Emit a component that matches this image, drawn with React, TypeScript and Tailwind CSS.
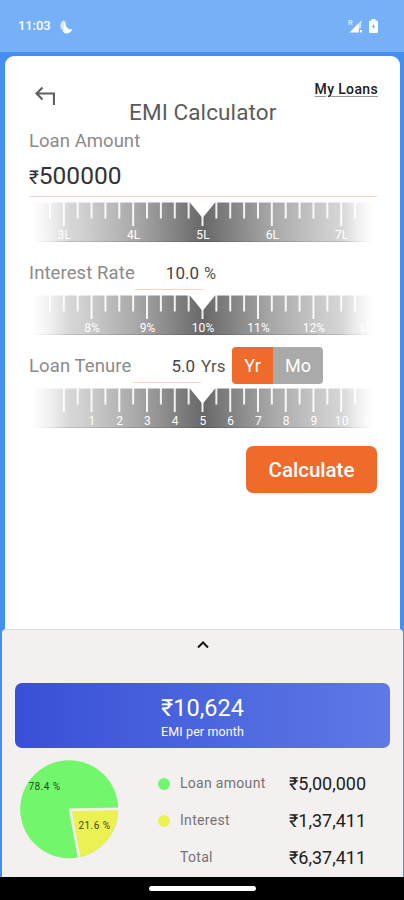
import React from 'react';

const CENTER = 173.5;
const STEP = 13.87;

type RulerProps = {
  id: string;
  every: number;
  first?: number;
  label: (n: number) => string;
};

// n counts the major divisions away from the selected value
const Ruler: React.FC<RulerProps> = ({ id, every, first = -11, label }) => {
  const ticks: number[] = [];
  for (let i = first; i <= 12; i++) ticks.push(i);

  return (
    <svg className="block h-10 w-[347px] overflow-visible" viewBox="0 0 347 40">
      <defs>
        <linearGradient id={`${id}-fill`} gradientUnits="userSpaceOnUse" x1="8" y1="26" x2="340" y2="14">
          <stop offset="0" stopColor="#e6e6e6" />
          <stop offset="0.14" stopColor="#d0d0d0" />
          <stop offset="0.3" stopColor="#a8a8a8" />
          <stop offset="0.5" stopColor="#686868" />
          <stop offset="0.7" stopColor="#a6a6a6" />
          <stop offset="0.86" stopColor="#cbcbcb" />
          <stop offset="1" stopColor="#e6e6e6" />
        </linearGradient>
        <linearGradient id={`${id}-fade`}>
          <stop offset="0.01" stopColor="#fff" stopOpacity="1" />
          <stop offset="0.12" stopColor="#fff" stopOpacity="0" />
          <stop offset="0.9" stopColor="#fff" stopOpacity="0" />
          <stop offset="0.99" stopColor="#fff" stopOpacity="1" />
        </linearGradient>
      </defs>
      <rect y="0.5" width="347" height="39.5" fill={`url(#${id}-fill)`} />
      <rect y="39" width="347" height="1" fill="#000" opacity="0.12" />
      <rect x="-1" width="349" height="41" fill={`url(#${id}-fade)`} />
      {ticks.map((i) => {
        const x = CENTER + i * STEP;
        const major = i % every === 0;
        return (
          <g key={i}>
            {i < 12 && (
              <line x1={x} x2={x} y1="0" y2={major ? 24 : 16.5} stroke="#fff" strokeOpacity="0.9" strokeWidth="2" />
            )}
            {major && (
              <text x={x + 0.5} y="37" textAnchor="middle" fontSize="12" fill="#fff" letterSpacing="0.1">
                {label(i / every)}
              </text>
            )}
          </g>
        );
      })}
      <path d={`M${CENTER - 13} 0H${CENTER + 13}L${CENTER} 16Z`} fill="#fff" />
    </svg>
  );
};

const legend = [
  { label: 'Loan amount', value: '₹5,00,000', dot: 'bg-[#72f76c]' },
  { label: 'Interest', value: '₹1,37,411', dot: 'bg-[#ecf152]' },
  { label: 'Total', value: '₹6,37,411', dot: 'bg-transparent' },
];

const StatusBar = () => (
  <div className="flex h-[52px] shrink-0 items-center bg-[#76b0f6] pl-[18px] pr-[26px] text-white">
    <span className="w-[32px] whitespace-nowrap text-[13px] font-medium tracking-[-0.1px]">11:03</span>
    <svg className="ml-[9px] mt-[1px] h-[16px] w-[15px]" viewBox="0 0 15 16">
      <path d="M5 1.200C2.800 2 1.300 4.200 1.300 6.800c0 2.600 1.600 4.600 3.700 5.400L8 11Z" fill="#fff" opacity="0.7" />
      <path d="M6.500 .8c-.6 4 .4 7.500 2.900 8.900 1.200.7 2.700.7 4.100.3-1.300 3.200-4 5-7 4.400L3.500 12.400l1.500-1C4.500 8.500 4.500 4 6.500 .8Z" fill="#fff" />
    </svg>
    <svg className="ml-auto h-[15px] w-[15px]" viewBox="0 0 15 15">
      <text x="0" y="6" fontSize="7.500" fontWeight="700" fill="#fff" opacity="0.7">R</text>
      <path d="M1.500 13.500 10.800 4V13.500Z" fill="#fff" />
      <path d="M11.300 3.500 14 1.500V3.200L12.800 4V9.500H11.300Z" fill="#fff" opacity="0.8" />
      <path d="M12 11h1.800v2.500H12Z" fill="#fff" />
    </svg>
    <svg className="ml-[6px] h-[14px] w-[9px]" viewBox="0 0 9 14">
      <path d="M2.500 0h4v1.500H7.500Q9 1.500 9 3v9.500q0 1.500-1.500 1.500h-6Q0 14 0 12.500V3q0-1.500 1.500-1.500h1Z" fill="#fff" />
      <path d="M5 4.500 2.800 8h1.400v2.600L6.300 7H5Z" fill="#76b0f6" />
    </svg>
  </div>
);

const PieChart = () => (
  <svg className="h-[100px] w-[100px] shrink-0" viewBox="0 0 100 100">
    <circle cx="49.200" cy="49.200" r="49" fill="#72f76c" />
    <path d="M49.200 49.200 98.200 48.400A49 49 0 0 1 59 97.200Z" fill="#ecf152" />
    <path d="M100 48.900 50.200 49.800 59.300 99" fill="none" stroke="#f3f0ef" strokeWidth="2.600" />
    <text x="8.500" y="30" fontSize="10" textLength="31.500" fill="#1f4a1d">78.4 %</text>
    <text x="58.500" y="68.500" fontSize="10" textLength="31.500" fill="#45471b">21.6 %</text>
  </svg>
);

const App: React.FC = () => {
  return (
    <div className="flex h-[900px] w-[404px] flex-col overflow-hidden bg-[#448ff0] font-[Roboto,'Liberation_Sans',sans-serif]">
      <StatusBar />

      <main className="ml-[5px] mr-[4px] mt-1 h-[573px] shrink-0 rounded-t-[9px] bg-white pl-6 pr-[23px]">
        <header className="flex h-[69px] items-start">
          <svg className="ml-[6px] mt-[30px] h-5 w-5 shrink-0" viewBox="0 0 20 20" fill="none" stroke="#606060" strokeWidth="2.200">
            <path d="M7.500 1.500 1.500 7.500l6 6M1.500 7.500H19V19" />
          </svg>
          <h1 className="ml-[74px] mt-[42px] w-[150px] whitespace-nowrap text-[22.5px] leading-[28px] tracking-[0.1px] text-[#5b5b5b]">EMI Calculator</h1>
          <a className="ml-auto mr-[-1px] mt-[24px] whitespace-nowrap text-[14px] font-medium leading-[18px] tracking-[0.35px] text-[#202020] underline decoration-[#999] underline-offset-2">My Loans</a>
        </header>

        <div className="h-[29px] text-[18.5px] leading-[32px] tracking-[0.05px] text-[#8b8b8b]">Loan Amount</div>
        <div className="h-[43px] border-b border-[#f8d5c3] text-[24.5px] leading-[43px] text-[#333]">
          <span className="text-[19px] leading-none">₹</span>500000
        </div>
        <div className="mt-[5px]">
          <Ruler id="amount" every={5} label={(n) => `${5 + n}L`} />
        </div>

        <div className="mt-[12px] flex h-[36px]">
          <div className="w-[106px] whitespace-nowrap text-[18.5px] leading-[39px] tracking-[0.1px] text-[#8b8b8b]">Interest Rate</div>
          <div className="h-[36px] w-[69px] border-b border-[#f8d5c3] pr-[5px] text-right text-[17px] leading-[39px] text-[#444]">10.0</div>
          <div className="text-[16.5px] leading-[39px] text-[#555]">%</div>
        </div>
        <div className="mt-[5px]">
          <Ruler id="rate" every={4} label={(n) => `${10 + n}%`} />
        </div>

        <div className="mt-[11px] flex h-[37px]">
          <div className="w-[103px] whitespace-nowrap text-[18.5px] leading-[41px] tracking-[0.1px] text-[#8b8b8b]">Loan Tenure</div>
          <div className="h-[37px] w-[69px] border-b border-[#f8d5c3] pr-[6px] text-right text-[17px] leading-[41px] text-[#444]">5.0</div>
          <div className="text-[17px] leading-[41px] text-[#555]">Yrs</div>
          <div className="ml-auto mr-[54px] mt-px flex h-[37px] w-[91px] shrink-0 overflow-hidden rounded-[4px] text-center text-[18px] leading-[38px] text-white">
            <button className="w-[41px] bg-[#ee6b2c]">Yr</button>
            <button className="w-[50px] bg-[#aaaaaa]">Mo</button>
          </div>
        </div>
        <div className="mt-[5px]">
          <Ruler id="tenure" every={2} first={-10} label={(n) => (n === -5 ? '' : `${5 + n}`)} />
        </div>

        <button className="ml-auto mt-[18px] block h-[47px] w-[131px] rounded-[7px] bg-[#ee6b2c] text-[20.5px] font-medium leading-[49px] text-white">Calculate</button>
      </main>

      <section className="ml-[2px] mr-[1px] h-[248px] shrink-0 rounded-t-[4px] border-t border-[#dedcdb] bg-[#f3f0ef]">
        <svg className="mx-auto mt-[9px] h-[12px] w-[12px]" viewBox="0 0 12 12" fill="none" stroke="#151515" strokeWidth="2">
          <path d="M1 8.500 6 3.500l5 5" />
        </svg>
        <div className="ml-[13px] mt-[32px] flex h-[65px] w-[375px] flex-col items-center rounded-[7px] bg-gradient-to-r from-[#394fd7] to-[#5f79e6] pt-[11px] text-white">
          <div className="text-[23.5px] leading-[28px]">₹10,624</div>
          <div className="text-[12.5px] leading-[20px] tracking-[0.1px]">EMI per month</div>
        </div>
        <div className="mt-[12px] flex pl-[18px]">
          <PieChart />
          <ul className="ml-[38px] mt-[5px]">
            {legend.map((row) => (
              <li key={row.label} className="flex h-[37px] items-center whitespace-nowrap">
                <span className={`h-3 w-3 rounded-full ${row.dot}`} />
                <span className="ml-[10px] w-[109px] text-[14px] tracking-[0.3px] text-[#747474]">{row.label}</span>
                <span className="text-[18px] text-[#202020]">{row.value}</span>
              </li>
            ))}
          </ul>
        </div>
      </section>

      <nav className="flex h-[23px] shrink-0 justify-center bg-black pt-[9px]">
        <div className="h-[5px] w-[107px] rounded-full bg-white" />
      </nav>
    </div>
  );
};

export default App;
